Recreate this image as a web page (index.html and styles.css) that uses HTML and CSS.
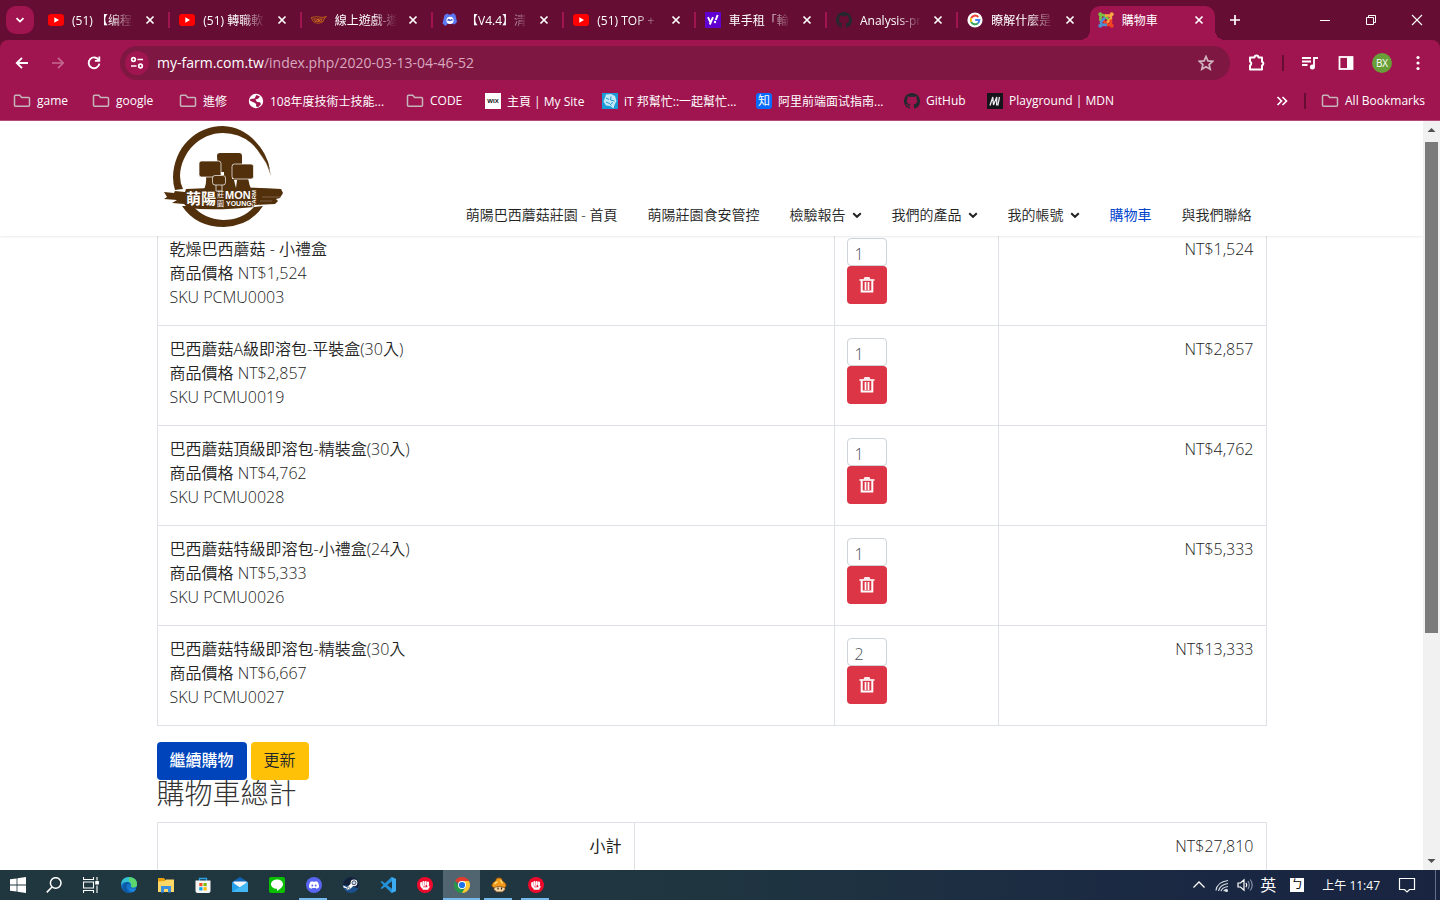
FILE: index.html
```html
<!DOCTYPE html>
<html lang="zh-Hant">
<head>
<meta charset="utf-8">
<meta name="viewport" content="width=device-width, initial-scale=1">
<title>購物車</title>
<link rel="stylesheet" href="styles.css">
</head>
<body>
<svg class="sprite" aria-hidden="true">
  <symbol id="i-close" viewBox="0 0 16 16"><path d="M4.5 4.5l7 7m0-7l-7 7" stroke="#fff" stroke-width="1.7" fill="none"/></symbol>
  <symbol id="i-youtube" viewBox="0 0 16 16"><rect y="2" width="16" height="12" rx="3" fill="#f00"/><path d="M6.3 5.3v5.4L11 8z" fill="#fff"/></symbol>
  <symbol id="i-github" viewBox="0 0 16 16"><path fill="#24292f" d="M8 0C3.58 0 0 3.58 0 8c0 3.54 2.29 6.53 5.47 7.59.4.07.55-.17.55-.38 0-.19-.01-.82-.01-1.49-2.01.37-2.53-.49-2.69-.94-.09-.23-.48-.94-.82-1.13-.28-.15-.68-.52-.01-.53.63-.01 1.08.58 1.23.82.72 1.21 1.87.87 2.33.66.07-.52.28-.87.51-1.07-1.78-.2-3.64-.89-3.64-3.95 0-.87.31-1.59.82-2.15-.08-.2-.36-1.02.08-2.12 0 0 .67-.21 2.2.82.64-.18 1.32-.27 2-.27.68 0 1.36.09 2 .27 1.53-1.04 2.2-.82 2.2-.82.44 1.1.16 1.92.08 2.12.51.56.82 1.27.82 2.15 0 3.07-1.87 3.75-3.65 3.95.29.25.54.73.54 1.48 0 1.07-.01 1.93-.01 2.2 0 .21.15.46.55.38A8.01 8.01 0 0016 8c0-4.42-3.58-8-8-8z"/></symbol>
  <symbol id="i-discord" viewBox="0 0 24 24"><path fill="currentColor" d="M20.3 4.4a19.8 19.8 0 0 0-4.9-1.5c-.3.4-.5.9-.7 1.3-1.8-.3-3.7-.3-5.5 0-.2-.4-.4-.9-.6-1.3a19.7 19.7 0 0 0-4.9 1.5C.5 9-.3 13.6.1 18.1c2 1.5 4 2.4 6 3 .5-.6.9-1.3 1.3-2-.7-.3-1.3-.6-2-.9l.5-.4c3.9 1.8 8.2 1.8 12.1 0l.5.4c-.6.4-1.2.7-1.9.9.4.7.8 1.4 1.2 2 2-.6 4-1.5 6-3 .5-5.2-.8-9.7-3.5-13.7zM8 15.3c-1.200 0-2.200-1.100-2.200-2.400s1-2.400 2.200-2.400 2.200 1.100 2.200 2.400-1 2.400-2.200 2.400zm8 0c-1.200 0-2.200-1.100-2.200-2.400s1-2.400 2.200-2.400 2.200 1.100 2.200 2.400-1 2.400-2.200 2.400z"/></symbol>
  <symbol id="i-folder" viewBox="0 0 18 16"><path d="M2.500 2.200h4.300l1.800 2.200h6.900q1 0 1 1v6.900q0 1-1 1h-13q-1 0-1-1v-9.100q0-1 1-1z" fill="none" stroke="#c5b5bb" stroke-width="1.500"/></symbol>
  <symbol id="i-trash" viewBox="0 0 16 18"><path d="M.5 4h15" stroke="#fff" stroke-width="1.600"/><path d="M4.500 3.500L5.500 1h5l1 2.500z" fill="#fff" opacity=".9"/><path d="M2.700 4.500v11h10.600v-11" fill="none" stroke="#fff" stroke-width="2"/><path d="M6.500 6v8M9.500 6v8" stroke="#fff" stroke-width="1.700"/></symbol>
  <symbol id="i-chevron" viewBox="0 0 10 10"><path d="M1.200 3.200L5 6.800l3.800-3.600" fill="none" stroke="#222" stroke-width="2"/></symbol>
  <symbol id="i-fist" viewBox="0 0 16 16"><circle cx="8" cy="8" r="8" fill="#ee0a2c"/><g fill="#fff"><rect x="3.200" y="5" width="2" height="4" rx="1"/><rect x="5.400" y="4" width="2" height="4.500" rx="1"/><rect x="7.600" y="4" width="2" height="4.500" rx="1"/><rect x="9.800" y="4.400" width="2.200" height="4.500" rx="1"/><path d="M3.400 8.300h4.800l1 1.200h-3v.8h4l.3-1.500h1.800l.4 1.200-1.200 1.700-.3 1H5.800l-.3-1-2-2z"/></g></symbol>
</svg>

<header class="browser">
  <div class="tabstrip">
    <button class="tab-search" aria-label="搜尋分頁"><svg viewBox="0 0 12 12"><path d="M2.500 4.200L6 7.600l3.500-3.400" fill="none" stroke="#fff" stroke-width="1.800"/></svg></button>
    <div class="tabs">
      <div class="tab"><svg class="fav"><use href="#i-youtube"/></svg><span class="tab-title">(51) 【编程</span><button class="tab-close" aria-label="關閉"><svg><use href="#i-close"/></svg></button></div>
      <div class="tab"><svg class="fav"><use href="#i-youtube"/></svg><span class="tab-title">(51) 轉職軟</span><button class="tab-close" aria-label="關閉"><svg><use href="#i-close"/></svg></button></div>
      <div class="tab"><svg class="fav" viewBox="0 0 16 16"><path d="M.5 5.500q5-1.500 11 0l3.500-1-2 2.500q-.5 4-6 4.300Q1.500 11 .5 5.500zM3 7h8l-1 2.500H4.500z" fill="none" stroke="#b4561c" stroke-width="1.100"/><path d="M5.500 9l1.500-2 1 2 1.500-2" stroke="#d66a20" fill="none"/></svg><span class="tab-title">線上遊戲-遊</span><button class="tab-close" aria-label="關閉"><svg><use href="#i-close"/></svg></button></div>
      <div class="tab"><svg class="fav" viewBox="0 0 16 16"><path d="M2.500 3l3-1.500 1 1h3l1.500-1.500 2.500 2 1.500 7-2.500 2.500-2-.8H5.800L3.500 14l-3-2.500z" fill="#5b78f5"/><circle cx="8" cy="8.300" r="3.600" fill="#fff"/><path d="M6 9q0-2 1.300-1.300Q8 9.500 9 8q1-1 1.300.5" fill="none" stroke="#4058c8" stroke-width="1.300"/></svg><span class="tab-title">【V4.4】清</span><button class="tab-close" aria-label="關閉"><svg><use href="#i-close"/></svg></button></div>
      <div class="tab"><svg class="fav"><use href="#i-youtube"/></svg><span class="tab-title">(51) TOP +</span><button class="tab-close" aria-label="關閉"><svg><use href="#i-close"/></svg></button></div>
      <div class="tab"><svg class="fav" viewBox="0 0 16 16"><rect width="16" height="16" fill="#6001d2"/><path d="M3 5.200l2.300 5M8 5.200L4.800 12.500" stroke="#fff" stroke-width="1.900"/><path d="M12.700 3l-2 5" stroke="#fff" stroke-width="2"/><circle cx="10" cy="10" r="1.200" fill="#fff"/></svg><span class="tab-title">車手租「輪</span><button class="tab-close" aria-label="關閉"><svg><use href="#i-close"/></svg></button></div>
      <div class="tab"><svg class="fav"><use href="#i-github"/></svg><span class="tab-title">Analysis-pr</span><button class="tab-close" aria-label="關閉"><svg><use href="#i-close"/></svg></button></div>
      <div class="tab tab-last"><svg class="fav" viewBox="0 0 16 16"><circle cx="8" cy="8" r="7.600" fill="#fff"/><g fill="none" stroke-width="2"><path d="M11.300 5A4.300 4.300 0 0 0 4.200 6.200" stroke="#ea4335"/><path d="M4.200 6.200a4.300 4.300 0 0 0 0 3.700" stroke="#fbbc05"/><path d="M4.200 9.900a4.300 4.300 0 0 0 6.700 1.300" stroke="#34a853"/><path d="M10.900 11.200A4.300 4.300 0 0 0 12.300 8H8.200" stroke="#4285f4"/></g></svg><span class="tab-title">瞭解什麼是</span><button class="tab-close" aria-label="關閉"><svg><use href="#i-close"/></svg></button></div>
      <div class="tab tab-active"><svg class="fav" viewBox="0 0 16 16"><g fill="none" stroke-width="2.700"><path d="M2.500 9V5.500q0-2.500 2.500-2.500 1 0 2 1l4 4" stroke="#7ac143"/><path d="M7 3.500h3.500q2.500 0 2.500 2.300 0 1-1 2l-4 4" stroke="#f9a541"/><path d="M13 7.500v3q0 2.500-2.500 2.500-1 0-2-1L5 8.500" stroke="#f44321"/><path d="M9 12.800H5.500Q3 13 3 10.500q0-1 1-2l3-3" stroke="#5091cd"/></g><circle cx="2.300" cy="2.300" r="2" fill="#7ac143"/><circle cx="13.700" cy="2.300" r="2" fill="#f9a541"/><circle cx="13.700" cy="13.700" r="2" fill="#f44321"/><circle cx="2.300" cy="13.700" r="2" fill="#5091cd"/></svg><span class="tab-title">購物車</span><button class="tab-close" aria-label="關閉"><svg><use href="#i-close"/></svg></button></div>
    </div>
    <button class="new-tab" aria-label="新分頁"><svg viewBox="0 0 12 12"><path d="M6 1v10M1 6h10" stroke="#fff" stroke-width="1.700"/></svg></button>
    <div class="window-controls">
      <button aria-label="最小化"><svg viewBox="0 0 12 12"><path d="M1 6.500h10" stroke="#fff"/></svg></button>
      <button aria-label="還原"><svg viewBox="0 0 12 12"><path d="M1.500 3.500h7v7h-7zM3.500 3.500v-2h7v7h-2" fill="none" stroke="#fff"/></svg></button>
      <button aria-label="關閉視窗"><svg viewBox="0 0 12 12"><path d="M1 1l10 10M11 1L1 11" stroke="#fff" stroke-width="1.100"/></svg></button>
    </div>
  </div>

  <div class="toolbar">
    <div class="tool-group">
      <button class="tool" aria-label="上一頁"><svg viewBox="0 0 16 16"><path d="M14 8H3M8 2.800L2.800 8 8 13.200" fill="none" stroke="#fff" stroke-width="1.900"/></svg></button>
      <button class="tool" aria-label="下一頁"><svg viewBox="0 0 16 16"><path d="M2 8h11M8 2.800L13.200 8 8 13.200" fill="none" stroke="#c4698f" stroke-width="1.700"/></svg></button>
      <button class="tool" aria-label="重新載入"><svg viewBox="0 0 16 16"><path d="M12.800 5.200A5.400 5.400 0 1 0 13.400 8.700" fill="none" stroke="#fff" stroke-width="1.900"/><path d="M14.200 1.500v5.300H8.900V5h3.500V1.500z" fill="#fff"/></svg></button>
    </div>
    <div class="omnibox">
      <button class="site-info" aria-label="網站資訊"><svg viewBox="0 0 16 16" fill="none" stroke="#fff" stroke-width="1.700"><circle cx="4.500" cy="4.500" r="1.800"/><path d="M8.500 4.500H14M2 11h5.500"/><circle cx="11.500" cy="11" r="1.800"/></svg></button>
      <span class="url"><b>my-farm.com.tw</b>/index.php/2020-03-13-04-46-52</span>
      <button class="star" aria-label="加入書籤"><svg viewBox="0 0 16 16"><path d="M8 1.500l1.900 4.400 4.800.4-3.600 3.200 1.100 4.700L8 11.700l-4.200 2.500 1.100-4.700L1.300 6.300l4.800-.4z" fill="none" stroke="#d0b3bf" stroke-width="1.700"/></svg></button>
    </div>
    <div class="tool-group">
      <button class="tool" aria-label="擴充功能"><svg class="ico-18" viewBox="0 0 18 18"><path d="M3 3.500h4.500a2 2 0 0 1 4 0H15v4.200a2 2 0 0 1 0 3.800v4H3v-4a2.200 2.200 0 0 0 0-4z" fill="none" stroke="#fff" stroke-width="2" stroke-linejoin="round"/></svg></button>
      <span class="divider"></span>
      <button class="tool" aria-label="媒體控制"><svg viewBox="0 0 16 16"><path d="M0 3h9M0 6.500h9M0 10h5.500M12 12V3h4" fill="none" stroke="#fff" stroke-width="1.800"/><circle cx="10.400" cy="12" r="2.500" fill="#fff"/></svg></button>
      <button class="tool" aria-label="側邊面板"><svg viewBox="0 0 16 16"><rect x="1.500" y="2" width="13" height="12" fill="none" stroke="#fff" stroke-width="1.800"/><path d="M9 2h6v12H9z" fill="#fff"/></svg></button>
      <button class="tool" aria-label="個人資料"><span class="avatar">BX</span></button>
      <button class="tool" aria-label="選單"><svg viewBox="0 0 16 16" fill="#fff"><circle cx="8" cy="2.500" r="1.600"/><circle cx="8" cy="8" r="1.600"/><circle cx="8" cy="13.500" r="1.600"/></svg></button>
    </div>
  </div>

  <nav class="bookmarks" aria-label="書籤列">
    <div class="bookmark-list">
      <a href="#"><svg class="folder"><use href="#i-folder"/></svg>game</a>
      <a href="#"><svg class="folder"><use href="#i-folder"/></svg>google</a>
      <a href="#"><svg class="folder"><use href="#i-folder"/></svg>進修</a>
      <a href="#"><svg class="fav" viewBox="0 0 16 16"><circle cx="8" cy="8" r="7.200" fill="#fff"/><path d="M8.500 2l3.500 1.500-2 2.300-2.500.8L9 9l3 .2 1 2-3 3-2-1 .2-2.300L6 9.500 2 7.800 2.500 6l4-.5z" fill="#a0144f"/></svg>108年度技術士技能...</a>
      <a href="#"><svg class="folder"><use href="#i-folder"/></svg>CODE</a>
      <a href="#"><svg class="fav" viewBox="0 0 16 16"><rect width="16" height="16" fill="#fff"/><text x="8" y="10" text-anchor="middle" class="wix-text">WIX</text></svg>主頁 | My Site</a>
      <a href="#"><svg class="fav" viewBox="0 0 16 16"><rect width="16" height="16" fill="#1a9ad6"/><path d="M4 1.500l5-.5 4 2 1.500 5-2 4-1 3.500L8 13l-4-.5L1.500 8.500z" fill="#c4e8f8"/><path d="M4 5l3 1.500M9 3.500L8.500 7l4 1M4 9l3.500 1.500 2 2M10.500 9l-1 2" stroke="#1a9ad6" fill="none"/></svg>iT 邦幫忙::一起幫忙...</a>
      <a href="#"><span class="fav zhihu">知</span>阿里前端面试指南...</a>
      <a href="#"><svg class="fav"><use href="#i-github"/></svg>GitHub</a>
      <a href="#"><svg class="fav" viewBox="0 0 16 16"><rect width="16" height="16" fill="#15141a"/><path d="M3 12.500L5.800 4l.7 8 3.300-8-.2 8.500M12.500 4l-1.700 8.500" stroke="#e8e8e8" stroke-width="1.300" fill="none"/></svg>Playground | MDN</a>
    </div>
    <button class="more" aria-label="更多書籤"><svg viewBox="0 0 12 12"><path d="M1.500 2L5.500 6l-4 4M6.500 2l4 4-4 4" fill="none" stroke="#fff" stroke-width="1.700"/></svg></button>
    <span class="divider"></span>
    <a class="all-bookmarks" href="#"><svg class="folder"><use href="#i-folder"/></svg>All Bookmarks</a>
  </nav>
</header>

<div class="viewport">
  <div class="page">
    <header class="site-header">
      <div class="container header-row">
        <a class="logo" href="#" aria-label="萌陽 MON YOUNG FARM">
          <svg viewBox="0 0 120 104">
            <g fill="#52300c">
              <path d="M106 45Q103 28 91 16 78 2 59 1C31 1 10 23 9 52q0 7 2 13l8-1q-3-6-3-13C17 27 36 8 59 8q16 0 28 10 12 11 19 27z"/>
              <path d="M18 81Q32 102 60 102 86 101 99 81L90 82Q78 95 59 95 40 94 29 81z"/>
              <path d="M88 14l10 11 6 12 3 14-5-13-8-12z" opacity=".7"/>
              <path d="M0 67l10 1 1-2 10 1 1-3q48-3 95 0l2 4-3 5-4 1 2 2-3 3-20 1-1 2q-40 4-66 1L20 79l-12-1 5-3-13-1 3-2z"/>
              <path d="M53 31q0-3 3-3h19q3 0 3 3v9H68v14h4v11H54V46z"/>
              <path d="M42 50h10q0 8 4 16H39q4-6 3-15z"/>
              <path d="M72 53h12q1 7 4 13H68q5-5 4-13z"/>
            </g>
            <g fill="#52300c" stroke="#fff" stroke-width=".7">
              <rect x="35" y="36" width="22" height="16" rx="2.500"/>
              <rect x="68" y="39" width="21.500" height="15" rx="2.500"/>
              <path d="M52 60v6h6v-6"/>
              <rect x="48.500" y="50.500" width="13" height="9.500" rx="2.500"/>
            </g>
            <path d="M57 47h3v3h-3zM70 55h3l-1 8z" fill="#fff"/>
            <path d="M98 72h20M96 76h12" stroke="#fff" stroke-width=".4" opacity=".6"/>
            <g fill="#fff">
              <text x="22" y="79" class="logo-cjk">萌陽</text>
              <text x="53" y="72" class="logo-small">莊</text>
              <text x="53" y="81" class="logo-small">園</text>
              <text x="61" y="74" class="logo-mon">MON</text>
              <text x="62" y="81" class="logo-young">YOUNG</text>
              <text transform="translate(92 82) rotate(-90)" class="logo-farm">FARM</text>
            </g>
          </svg>
        </a>
        <nav class="site-nav" aria-label="主選單">
          <a href="#">萌陽巴西蘑菇莊園 - 首頁</a>
          <a href="#">萌陽莊園食安管控</a>
          <a href="#">檢驗報告<svg><use href="#i-chevron"/></svg></a>
          <a href="#">我們的產品<svg><use href="#i-chevron"/></svg></a>
          <a href="#">我的帳號<svg><use href="#i-chevron"/></svg></a>
          <a href="#" class="current" aria-current="page">購物車</a>
          <a href="#">與我們聯絡</a>
        </nav>
      </div>
    </header>

    <main class="container cart">
      <table class="cart-table">
        <colgroup><col class="col-name"><col class="col-qty"><col class="col-price"></colgroup>
        <tbody>
          <tr><td>乾燥巴西蘑菇 - 小禮盒<br>商品價格 NT$1,524<br>SKU PCMU0003</td><td class="qty-cell"><input class="qty" type="text" value="1" aria-label="數量 PCMU0003"><button class="remove" aria-label="移除"><svg><use href="#i-trash"/></svg></button></td><td class="num">NT$1,524</td></tr>
          <tr><td>巴西蘑菇A級即溶包-平裝盒(30入)<br>商品價格 NT$2,857<br>SKU PCMU0019</td><td class="qty-cell"><input class="qty" type="text" value="1" aria-label="數量 PCMU0019"><button class="remove" aria-label="移除"><svg><use href="#i-trash"/></svg></button></td><td class="num">NT$2,857</td></tr>
          <tr><td>巴西蘑菇頂級即溶包-精裝盒(30入)<br>商品價格 NT$4,762<br>SKU PCMU0028</td><td class="qty-cell"><input class="qty" type="text" value="1" aria-label="數量 PCMU0028"><button class="remove" aria-label="移除"><svg><use href="#i-trash"/></svg></button></td><td class="num">NT$4,762</td></tr>
          <tr><td>巴西蘑菇特級即溶包-小禮盒(24入)<br>商品價格 NT$5,333<br>SKU PCMU0026</td><td class="qty-cell"><input class="qty" type="text" value="1" aria-label="數量 PCMU0026"><button class="remove" aria-label="移除"><svg><use href="#i-trash"/></svg></button></td><td class="num">NT$5,333</td></tr>
          <tr><td>巴西蘑菇特級即溶包-精裝盒(30入<br>商品價格 NT$6,667<br>SKU PCMU0027</td><td class="qty-cell"><input class="qty" type="text" value="2" aria-label="數量 PCMU0027"><button class="remove" aria-label="移除"><svg><use href="#i-trash"/></svg></button></td><td class="num">NT$13,333</td></tr>
        </tbody>
      </table>
      <div class="actions">
        <button class="btn btn-primary">繼續購物</button>
        <button class="btn btn-warning">更新</button>
      </div>
      <h2>購物車總計</h2>
      <table class="cart-table totals">
        <colgroup><col class="col-label"><col></colgroup>
        <tbody><tr><th scope="row">小計</th><td class="num">NT$27,810</td></tr></tbody>
      </table>
    </main>
  </div>
  <div class="scrollbar" aria-hidden="true">
    <svg viewBox="0 0 17 17"><path d="M4.500 11h8l-4-4z" fill="#505050"/></svg>
    <div class="track"><div class="thumb"></div></div>
    <svg viewBox="0 0 17 17"><path d="M4.500 6h8l-4 4z" fill="#505050"/></svg>
  </div>
</div>

<footer class="taskbar">
  <div class="apps">
    <button class="start" aria-label="開始"><svg viewBox="0 0 16 16"><path d="M0 2.300l6.600-.9v6.200H0zM7.400 1.300L16 0v7.600H7.400zM0 8.400h6.600v6.200L0 13.700zM7.400 8.400H16V16l-8.600-1.300z" fill="#fff"/></svg></button>
    <button class="start" aria-label="搜尋"><svg viewBox="0 0 16 16"><circle cx="9.700" cy="6" r="5.300" fill="none" stroke="#fff" stroke-width="1.500"/><path d="M6 10L.8 15.400" stroke="#fff" stroke-width="1.600"/></svg></button>
    <button class="start" aria-label="工作檢視"><svg viewBox="0 0 16 16" fill="none" stroke="#fff" stroke-width="1.100"><path d="M.5 0v2.500h10V0M.5 5h10v6H.5zM.5 16v-2.500h10V16M14 0v3.500M14 8.500V16"/><path d="M12.800 4.500h2.500v2.500h-2.500z" fill="#fff"/></svg></button>
    <button aria-label="Edge"><svg viewBox="0 0 16 16"><circle cx="8" cy="8" r="8" fill="#1473c8"/><path d="M0 7Q1 0 8 0q8 1 8 7 0 3.500-4 3.500-2.500-.1-2-1.500Q9 5 5.500 5 1.500 5 0 8z" fill="#34c1d0"/><path d="M8 0q8 .5 8 7 0 3.500-4 3.500-2.500-.1-2-1.500 1.500-3-2-5z" fill="#5dd66b"/><path d="M5.500 8.500Q5 13 9.500 15.800 4 16.500 1.800 12q-.8-5 3.700-7 5 0 4.500 4.500l-.2-1.500q-3-2.500-4.300.5z" fill="#0c59a4"/><path d="M7.500 8q0 5 7 3.800l.5.200-2 3q-6-1-5.500-7z" fill="#1b86dc"/></svg></button>
    <button aria-label="檔案總管"><svg viewBox="0 0 16 16"><path d="M0 1h6l1.500 2H16v12H0z" fill="#e8a00c"/><path d="M0 4.500L7 4l1-1.500h8V15H0z" fill="#ffd766"/><path d="M3 15.500V9h10v6.500h-3V12H6v3.500z" fill="#3b8fe0"/></svg></button>
    <button aria-label="Store"><svg viewBox="0 0 16 16"><path d="M4.500 5V1.500h7V5" fill="none" stroke="#29a4e8" stroke-width="1.300"/><path d="M.5 3.500h15V14q0 2-2 2h-11q-2 0-2-2z" fill="#f5f5f5"/><path d="M4.300 6H7.500v3.200H4.300z" fill="#f25022"/><path d="M8.500 6h3.200v3.200H8.500z" fill="#7fba00"/><path d="M4.300 10.200h3.200v3.200H4.300z" fill="#00a4ef"/><path d="M8.500 10.200h3.200v3.200H8.500z" fill="#ffb900"/></svg></button>
    <button aria-label="郵件"><svg viewBox="0 0 16 16"><path d="M0 5l8-5 8 5v3H0z" fill="#1065b5"/><path d="M1.500 4.500h13v6h-13z" fill="#f2f7fb"/><path d="M0 5l8 5.500L16 5v10H0z" fill="#24a0ea"/><path d="M0 15L16 5v10z" fill="#43b8f5"/></svg></button>
    <button aria-label="LINE"><svg viewBox="0 0 16 16"><rect width="16" height="16" rx="2" fill="#08bf00"/><path d="M8 2.500c3.400 0 6 2 6 4.700 0 2.600-3 5-6 6.800v-2.300c-3.400 0-6-2-6-4.500S4.600 2.500 8 2.500z" fill="#fff"/></svg></button>
    <button class="running" aria-label="Discord"><span class="discord-disc"><svg><use href="#i-discord"/></svg></span></button>
    <button aria-label="Steam"><svg viewBox="0 0 16 16"><circle cx="8" cy="8" r="8" fill="#1a4f8c"/><path d="M0 8a8 8 0 0 1 16 0l-1 3L7 9z" fill="#122038"/><path d="M.2 8.500L4 10.200 8.500 6l1.500 3.200-3.500 3.200Q4 14.500 3.200 11.300L.5 10.500z" fill="#fff"/><circle cx="11" cy="5.800" r="3.400" fill="#fff"/><circle cx="11" cy="5.800" r="2" fill="#d5dde6" stroke="#14264a" stroke-width=".8"/><circle cx="5.300" cy="11.300" r="1.300" fill="none" stroke="#14264a" stroke-width=".6"/></svg></button>
    <button aria-label="VS Code"><svg viewBox="0 0 16 16"><path d="M11.500 0L16 2v12l-4.500 2L5 9.800 2 12 .5 11.300 3.500 8 .5 4.700 2 4l3 2.200zM12 4.300L7.200 8l4.800 3.700z" fill="#2490d8" fill-rule="evenodd"/><path d="M11.500 0L16 2v12l-4.500 2 .5-4.300V4.300z" fill="#3cabf2"/></svg></button>
    <button aria-label="遊戲平台"><svg><use href="#i-fist"/></svg></button>
    <button class="focused" aria-label="Chrome"><svg viewBox="0 0 16 16"><path d="M8 8L1.070 4A8 8 0 0 1 14.930 4z" fill="#e33b2e"/><path d="M8 8V4h6.930A8 8 0 0 1 8 16z" fill="#fcc934"/><path d="M1.070 4A8 8 0 0 0 8 16l3.460-6L8 8 4.540 10z" fill="#279847"/><circle cx="8" cy="8" r="4" fill="#fff"/><circle cx="8" cy="8" r="3.100" fill="#1a73e8"/></svg></button>
    <button class="running" aria-label="楓之谷"><svg viewBox="0 0 16 16"><path d="M3 8h11v4.500l-2.500 2.500h-6L3 12.500z" fill="#f6d9a8" stroke="#6a3a14" stroke-width=".8"/><path d="M.7 9Q1 5.500 4.500 4l1-2.500Q8 0 10.500 1.500l1 2.500Q15 5.500 15.300 9l-2 1.500Q8 8 2.500 10.500z" fill="#f29a1c" stroke="#8b4a0a" stroke-width=".8"/><path d="M3.500 7q1.500-2 3-2M9.500 3l2 3.500" stroke="#ffe07a" stroke-width="1.500"/><path d="M7 10.500v2M10.500 10.500v2" stroke="#301808" stroke-width="1.200"/></svg></button>
    <button class="running" aria-label="遊戲平台 2"><svg><use href="#i-fist"/></svg></button>
  </div>
  <div class="tray">
    <svg class="tray-icon" viewBox="0 0 16 16"><path d="M2.500 10.500L8 5l5.500 5.500" fill="none" stroke="#fff" stroke-width="1.300"/></svg>
    <svg class="tray-icon" viewBox="0 0 16 16" fill="none" stroke="#d5dbe2" stroke-width="1.200"><path d="M2 13.500Q3 5 14 3.500M4.500 14Q5.500 8 14 6.500M7 14.200Q8 10.500 14 9.500M9.700 14.300Q10.500 12.500 13 12.300"/><circle cx="12.500" cy="13.500" r="1" fill="#fff"/></svg>
    <svg class="tray-icon" viewBox="0 0 16 16" fill="none" stroke="#fff" stroke-width="1.200"><path d="M1 6h2.500L7 2.800v10.400L3.500 10H1zM9 5.800q1.500 2.200 0 4.400"/><path d="M11 4q2.500 4 0 8M13.200 2.500q4 5.500 0 11" stroke="#8490a3"/></svg>
    <span class="ime">英</span>
    <span class="bopomofo">ㄅ</span>
    <time>上午 11:47</time>
    <button class="notify" aria-label="通知"><svg viewBox="0 0 18 18"><path d="M1.500 2.500h15v11h-5l-2.500 2.500-2.500-2.500h-5z" fill="none" stroke="#fff" stroke-width="1.200"/></svg></button>
    <span class="show-desktop"></span>
  </div>
</footer>
</body>
</html>
```

FILE: styles.css
```css
* { box-sizing: border-box; }

html, body { height: 100%; }

body {
  margin: 0;
  display: flex;
  flex-direction: column;
  overflow: hidden;
  background: #fff;
  font-family: "Open Sans", "Noto Sans CJK TC", sans-serif;
}

button {
  margin: 0;
  padding: 0;
  border: 0;
  background: none;
  font: inherit;
  color: inherit;
  display: flex;
  align-items: center;
  justify-content: center;
}

a { color: inherit; text-decoration: none; }
svg { display: block; flex: none; }
.sprite { position: absolute; width: 0; height: 0; }
.fav { width: 16px; height: 16px; flex: none; }

/* Browser chrome */
.browser {
  flex: none;
  background: #650d32;
  color: #fff;
  font-size: 12px;
  border-bottom: 1px solid #b64a78;
}

.tabstrip { display: flex; height: 40px; padding-left: 6px; }

.tab-search {
  width: 28px;
  height: 28px;
  margin: 6px 5px 6px 0;
  border-radius: 10px;
  background: #a0144f;
}
.tab-search svg { width: 12px; height: 12px; }

.tabs {
  flex: 0 1 1182px;
  min-width: 0;
  display: grid;
  grid-template-columns: repeat(9, minmax(0, 1fr));
}

.tab {
  position: relative;
  display: flex;
  align-items: center;
  gap: 8px;
  padding: 0 12px 0 9px;
}
.tab::after {
  content: "";
  position: absolute;
  right: 0;
  top: 12px;
  width: 2px;
  height: 16px;
  background: #a0144f;
}
.tab-last::after { display: none; }

.tab-title {
  flex: 1;
  min-width: 0;
  overflow: hidden;
  white-space: nowrap;
  -webkit-mask-image: linear-gradient(90deg, #000 60%, transparent);
  mask-image: linear-gradient(90deg, #000 60%, transparent);
}
.tab-close, .tab-close svg { width: 16px; height: 16px; }

.tab-active {
  height: 34px;
  margin-top: 6px;
  padding: 0 8px 6px;
  margin-right: 6px;
  background: #a0144f;
  border-radius: 10px 10px 0 0;
}
.tab-active .tab-title { -webkit-mask-image: none; mask-image: none; }
.tab-active::before, .tab-active::after {
  content: "";
  position: absolute;
  top: auto;
  bottom: 0;
  width: 10px;
  height: 10px;
}
.tab-active::before { left: -10px; background: radial-gradient(circle at 0 0, transparent 10px, #a0144f 10px); }
.tab-active::after { right: -10px; background: radial-gradient(circle at 100% 0, transparent 10px, #a0144f 10px); }

.new-tab { width: 28px; }
.new-tab svg { width: 12px; height: 12px; }

.window-controls { display: flex; margin-left: auto; }
.window-controls button { width: 46px; }
.window-controls svg { width: 12px; height: 12px; }

.toolbar {
  display: flex;
  align-items: center;
  height: 45px;
  padding: 0 4px;
  background: #a0144f;
  border-radius: 8px 8px 0 0;
}
.tool-group { display: flex; align-items: center; }
.tool { width: 36px; height: 34px; }
.tool svg { width: 16px; height: 16px; }
.tool .ico-18 { width: 18px; height: 18px; }

.omnibox {
  flex: 1;
  min-width: 0;
  display: flex;
  align-items: center;
  height: 34px;
  margin: 0 8px;
  padding: 0 16px 0 5px;
  border-radius: 17px;
  background: #7e1843;
}
.site-info { width: 24px; height: 24px; border-radius: 50%; background: #a0144f; }
.site-info svg { width: 16px; height: 16px; }
.url { flex: 1; min-width: 0; overflow: hidden; margin-left: 8px; font-size: 14px; color: #d9a8bf; white-space: nowrap; }
.url b { font-weight: 400; color: #fff; }
.star svg { width: 16px; height: 16px; }

.divider { flex: none; width: 2px; height: 16px; margin: 0 8px; background: #650d32; }
.avatar {
  width: 20px;
  height: 20px;
  border-radius: 50%;
  background: #689f38;
  font-size: 10px;
  line-height: 20px;
  text-align: center;
}

.bookmarks {
  display: flex;
  align-items: center;
  height: 35px;
  padding: 0 15px 4px 13px;
  background: #a0144f;
}
.bookmark-list {
  flex: 1;
  min-width: 0;
  display: grid;
  grid-template-columns: 79px 87px 69px 158px 79px 117px 154px 148px 83px 150px;
  overflow: hidden;
}
.bookmarks a { display: flex; align-items: center; gap: 6px; white-space: nowrap; }
.folder { width: 18px; height: 16px; }
.more svg { width: 12px; height: 12px; }
.bookmarks .divider { margin: 0 15px 0 16px; }
.zhihu {
  border-radius: 3px;
  background: #0a6cff;
  font-size: 12px;
  line-height: 16px;
  text-align: center;
}
.wix-text { font: 700 6px "Liberation Sans", sans-serif; fill: #111; }

/* Web page */
.viewport { flex: 1; min-height: 0; display: flex; }
.page {
  flex: 1;
  min-width: 0;
  overflow: hidden;
  color: #222;
  font-size: 16px;
  font-weight: 350;
  line-height: 24px;
}
.container { max-width: 1140px; margin: 0 auto; padding: 0 15px; }

.site-header {
  position: relative;
  z-index: 1;
  background: #fff;
  box-shadow: 0 0 3px rgba(0, 0, 0, .15);
}
.header-row { display: flex; justify-content: space-between; align-items: flex-end; height: 115px; }
.logo { margin: 0 0 7px 7px; }
.logo svg { width: 120px; height: 104px; }
.logo-cjk { font: 700 15px "Noto Sans CJK TC", sans-serif; }
.logo-small { font: 400 7px "Noto Sans CJK TC", sans-serif; }
.logo-mon { font: 700 11px "Liberation Sans", sans-serif; }
.logo-young { font: 700 7px "Liberation Sans", sans-serif; }
.logo-farm { font: 700 6px "Liberation Sans", sans-serif; }

.site-nav { display: flex; font-size: 14px; line-height: 20px; padding-bottom: 11px; }
.site-nav a { display: flex; align-items: center; padding: 0 15px; white-space: nowrap; }
.site-nav svg { width: 10px; height: 10px; margin-left: 6px; }
.site-nav .current { color: #0044cc; font-weight: 400; }

.cart { margin-top: -11px; }
.cart-table { width: 100%; table-layout: fixed; border-collapse: collapse; }
.cart-table tr { height: 100px; }
.cart-table td, .cart-table th {
  padding: 11px 12px;
  border: 1px solid #dee2e6;
  vertical-align: top;
  text-align: left;
}
.cart-table .qty-cell { padding: 12px; }
.col-qty { width: 164px; }
.col-price { width: 268px; }
.col-label { width: 477px; }
.cart-table .num { text-align: right; }
.cart-table th { font-weight: 400; text-align: right; }

.qty {
  display: block;
  width: 40px;
  height: 28px;
  padding: 3px 7px 0;
  border: 1px solid #ced4da;
  border-radius: 4px;
  font: inherit;
  color: #495057;
}
.remove { width: 40px; height: 38px; border-radius: 4px; background: #dc3545; }
.remove svg { width: 16px; height: 18px; }

.actions { display: flex; gap: 4px; margin-top: 16px; }
.btn { height: 38px; padding: 0 13px 2px; border-radius: 4px; }
.btn-primary { background: #0044bb; color: #fff; font-weight: 500; }
.btn-warning { background: #ffc107; color: #212529; }

h2 { margin: 0 0 16px; font-size: 28px; line-height: 26px; font-weight: 300; color: #333; }

.scrollbar { flex: none; width: 17px; display: flex; flex-direction: column; background: #f1f1f1; }
.scrollbar svg { width: 17px; height: 17px; }
.track { flex: 1; padding: 4px 2px 0; }
.thumb { height: 69%; background: #7b7b7b; }

/* Taskbar */
.taskbar {
  flex: none;
  display: flex;
  justify-content: space-between;
  height: 30px;
  background: linear-gradient(90deg, #21373f, #1f3540 50%, #1a2743 85%, #182440);
  color: #fff;
}
.apps { display: flex; }
.apps button { position: relative; width: 37px; }
.apps .start { width: 36px; }
.apps .start:nth-child(3) { width: 38px; }
.apps button > svg { width: 16px; height: 16px; }
.apps .focused { background: #50656f; }
.apps .running::after, .apps .focused::after {
  content: "";
  position: absolute;
  left: 4px;
  right: 5px;
  bottom: 0;
  height: 2px;
  background: #76b9ed;
}
.apps .focused::after { left: 0; right: 0; }
.discord-disc {
  display: flex;
  align-items: center;
  justify-content: center;
  width: 16px;
  height: 16px;
  border-radius: 50%;
  background: #5865f2;
}
.discord-disc svg { width: 10px; height: 10px; }

.tray { display: flex; align-items: center; font-size: 12px; }
.tray-icon { width: 16px; height: 16px; margin-right: 7px; }
.ime { font-size: 16px; line-height: 30px; }
.bopomofo {
  width: 14px;
  height: 14px;
  margin: 0 18px 0 14px;
  background: #fff;
  color: #000;
  font-size: 12px;
  line-height: 14px;
  text-align: center;
}
.notify { margin: 0 19px 0 18px; }
.notify svg { width: 18px; height: 18px; }
.show-desktop { width: 5px; height: 100%; border-left: 1px solid #66708a; }
```
